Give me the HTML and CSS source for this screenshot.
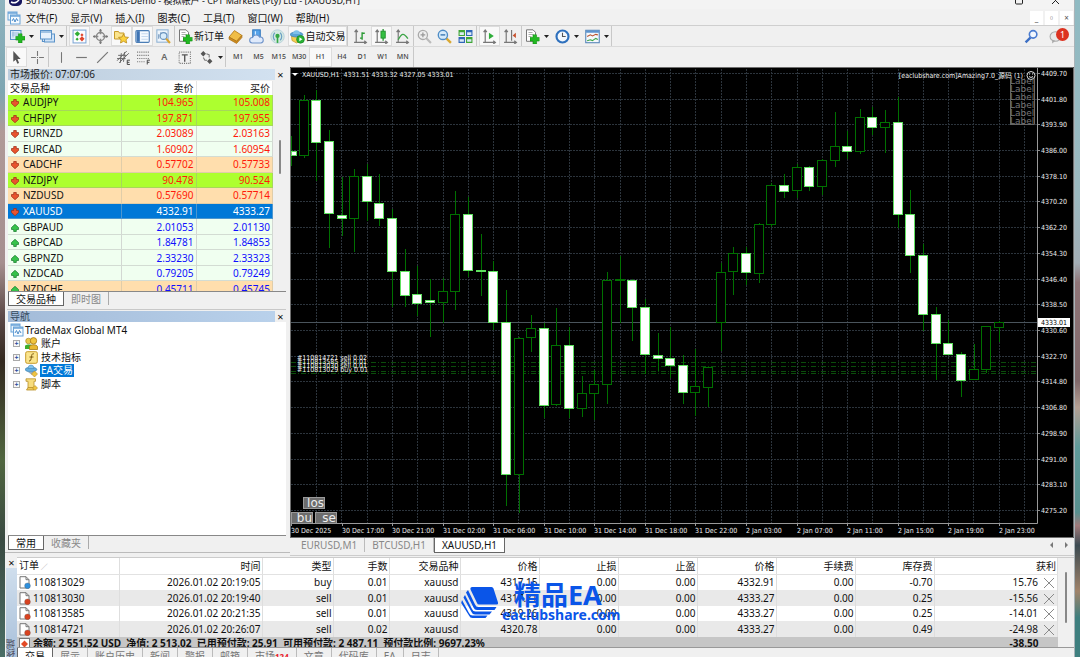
FILE: index.html
```html
<!DOCTYPE html>
<html lang="zh-CN">
<head>
<meta charset="utf-8">
<title>XAUUSD,H1</title>
<link rel="stylesheet" href="styles.css">
</head>
<body>
<svg class="defs" aria-hidden="true">
  <symbol id="i-drop" viewBox="0 0 5 3"><path d="M0 0h5L2.500 3z" fill="#222"/></symbol>
  <symbol id="i-plus" viewBox="0 0 8 8"><path d="M2.500 0h3v2.500H8v3H5.500V8h-3V5.500H0v-3h2.500z" fill="#22b822" stroke="#0c8a0c" stroke-width=".5"/></symbol>
  <symbol id="i-newchart" viewBox="0 0 15 14"><rect x=".5" y="1" width="10.500" height="9" fill="#dcecfb" stroke="#5b93c9"/><path d="M2 3.500h7M2 5.500h7M3 2v6" stroke="#8fb4d8" stroke-width=".8"/><use href="#i-plus" x="5.500" y="4" width="9.500" height="9.500"/></symbol>
  <symbol id="i-profiles" viewBox="0 0 15 14"><rect x="4.500" y="4.500" width="10" height="8" fill="#cfe2f6" stroke="#5b93c9"/><rect x=".5" y="1" width="11" height="8.500" fill="#e8f2fc" stroke="#5b93c9"/><path d="M1 2.500h10M2.500 9.500V12h2" stroke="#5b93c9" stroke-width="1.200" fill="none"/></symbol>
  <symbol id="i-market" viewBox="0 0 14 14"><rect x="1" y="1" width="12" height="12" fill="#fdfdff" stroke="#7fa9d6"/><path d="M5 2l2.500 2.500L5 7 2.500 4.500z" fill="#2fae35"/><path d="M9.300 4l1.500 1.500L9.300 7 7.800 5.500z" fill="#e0452c"/><path d="M9.300 6.800l2.400 2.400-2.400 2.400-2.400-2.400z" fill="#e0452c"/><path d="M4.800 8l1.500 1.500-1.500 1.500-1.500-1.500z" fill="#2fae35"/></symbol>
  <symbol id="i-cross" viewBox="0 0 14 14"><circle cx="7" cy="7" r="3.800" fill="none" stroke="#888" stroke-width="1.300"/><path d="M7 0v5M7 9v5M0 7h5M9 7h5" stroke="#888" stroke-width="1.300"/><path d="M7 0l1.500 2h-3zM7 14l1.500-2h-3zM0 7l2-1.500v3zM14 7l-2-1.500v3z" fill="#777"/></symbol>
  <symbol id="i-star" viewBox="0 0 15 14"><path d="M.5 2h4l1 1.500h4.500v6H.5z" fill="#fbe48c" stroke="#c69a2b"/><path d="M9.500 4.500l1.500 3 3.500.4-2.500 2.300.7 3.300-3.200-1.700-3 1.700.6-3.300L4.500 7.900l3.500-.4z" fill="#fcd33e" stroke="#b98a1c" stroke-width=".8"/></symbol>
  <symbol id="i-terminal" viewBox="0 0 14 14"><rect x=".8" y="1.500" width="12.500" height="11" rx="1" fill="#f5faff" stroke="#4a7db5"/><rect x="1.500" y="2" width="3" height="10" fill="#3e74b4"/><path d="M6 4.500h6M6 7h6M6 9.500h6" stroke="#c5d9ee"/></symbol>
  <symbol id="i-tester" viewBox="0 0 14 14"><rect x=".8" y=".8" width="10.500" height="11.500" fill="#eef5fc" stroke="#8fb2d4"/><path d="M2.500 9V5M4.500 7V3" stroke="#7b9cc0"/><circle cx="7" cy="6.500" r="3.200" fill="#d8ecfb" stroke="#6a94bd" stroke-width="1.100"/><path d="M9.500 9l3.500 4" stroke="#d9a32e" stroke-width="2"/></symbol>
  <symbol id="i-order" viewBox="0 0 14 15"><path d="M1 .8h6.500l2.500 2.500v9H1z" fill="#fff" stroke="#777"/><path d="M3 3.500h4M3 5.500h5M3 7.500h3" stroke="#999" stroke-width=".8"/><use href="#i-plus" x="4.500" y="5.500" width="9.500" height="9.500"/></symbol>
  <symbol id="i-book" viewBox="0 0 14 14"><path d="M1 7.500L6 1.500l7 4.500-5 5.500z" fill="#f0bd45" stroke="#b47c18" stroke-width=".8"/><path d="M1 7.500v2L8 13.500l5-5.500V6l-5 5.500z" fill="#d28d1e" stroke="#a06a12" stroke-width=".6"/></symbol>
  <symbol id="i-cloud" viewBox="0 0 14 14"><rect x="3.500" y=".8" width="7" height="7" fill="#55a3ea" stroke="#3278bd"/><path d="M6 2v4" stroke="#d8edff"/><path d="M3 13a2.500 2.500 0 0 1 .3-5 3.700 3.700 0 0 1 6.700-.4A2.700 2.700 0 0 1 11 13z" fill="#dfeafb" stroke="#6d92c9"/></symbol>
  <symbol id="i-signal" viewBox="0 0 14 14"><circle cx="7" cy="7" r="6.300" fill="#d4e9e0" stroke="#b4cfdc" stroke-width=".8"/><path d="M4.500 3.500a5 5 0 0 0 0 7M9.500 3.500a5 5 0 0 1 0 7" fill="none" stroke="#6a9fc4" stroke-width="1.100"/><circle cx="7" cy="6.500" r="2" fill="#35a845"/><path d="M7 7v6" stroke="#35a845" stroke-width="1.500"/></symbol>
  <symbol id="i-auto" viewBox="0 0 15 14"><path d="M1.500 6.500h10l-.5 4.500-4.500 2.500L2 11z" fill="#f4cf52" stroke="#c4942a" stroke-width=".7"/><ellipse cx="6.500" cy="5" rx="6.300" ry="2.500" fill="#5aa5d8" stroke="#3b80b6" stroke-width=".7"/><path d="M3 4.500a3.500 3.800 0 0 1 7 0z" fill="#7fc0ea"/><circle cx="10.500" cy="9.800" r="3.900" fill="#28b234" stroke="#127a1c" stroke-width=".6"/><path d="M9.400 7.800v4l3-2z" fill="#fff"/></symbol>
  <symbol id="i-bars" viewBox="0 0 14 14"><path d="M3 1v11.500M1 12.500h11M1.500 3L3 1l1.500 2M10.500 11l2 1.500-2 1.500" fill="none" stroke="#777" stroke-width="1.100"/><path d="M8.500 3v7M8.500 4h2.500M6.500 8.500h2" stroke="#2b9a35" stroke-width="1.300"/></symbol>
  <symbol id="i-candle" viewBox="0 0 14 14"><path d="M3 1v11.500M1 12.500h11M1.500 3L3 1l1.500 2M10.500 11l2 1.500-2 1.500" fill="none" stroke="#777" stroke-width="1.100"/><path d="M8.500 0v11" stroke="#1e8f2a" stroke-width="1.200"/><rect x="6.500" y="2" width="4" height="6.500" fill="#35c043" stroke="#1e8f2a" stroke-width=".8"/></symbol>
  <symbol id="i-line" viewBox="0 0 14 14"><path d="M3 1v11.500M1 12.500h11M1.500 3L3 1l1.500 2M10.500 11l2 1.500-2 1.500" fill="none" stroke="#777" stroke-width="1.100"/><path d="M3 10c3-6 5-7 9-1" stroke="#3ba546" fill="none" stroke-width="1.300"/></symbol>
  <symbol id="i-zin" viewBox="0 0 14 14"><path d="M8.500 8.500l4.500 4.500" stroke="#bbb" stroke-width="2"/><circle cx="5.500" cy="5.500" r="4.300" fill="#eee" stroke="#aaa" stroke-width="1.200"/><path d="M5.500 3.300v4.400M3.300 5.500h4.400" stroke="#999" stroke-width="1.200"/></symbol>
  <symbol id="i-zout" viewBox="0 0 14 14"><path d="M8.500 8.500l4.500 4.500" stroke="#d9a832" stroke-width="2.200"/><circle cx="5.500" cy="5.500" r="4.300" fill="#d5ebfb" stroke="#4f8dc6" stroke-width="1.300"/><path d="M3.300 5.500h4.400" stroke="#3978b5" stroke-width="1.300"/></symbol>
  <symbol id="i-tile" viewBox="0 0 14 14"><path d="M.5 1h6v5.500h-6zM7.500 7.500h6V13h-6z" fill="#3fa535"/><path d="M7.500 1h6v5.500h-6zM.5 7.500h6V13h-6z" fill="#2f66b8"/><path d="M1.500 3h4v2.500h-4zM8.500 3h4v2.500h-4zM1.500 9.500h4V12h-4zM8.500 9.500h4V12h-4z" fill="#dceaf5"/></symbol>
  <symbol id="i-scroll" viewBox="0 0 14 14"><path d="M3 1v11.500M1 12.500h11M1.500 3L3 1l1.500 2M10.500 11l2 1.500-2 1.500" fill="none" stroke="#777" stroke-width="1.100"/><path d="M6.500 3.500v6L11 6.500z" fill="#2fae3a"/></symbol>
  <symbol id="i-shift" viewBox="0 0 14 14"><path d="M3 1v11.500M1 12.500h11M1.500 3L3 1l1.500 2M10.500 11l2 1.500-2 1.500M8 1v10" fill="none" stroke="#777" stroke-width="1.100"/><path d="M9 6l3-2.500v5z" fill="#c7502c"/></symbol>
  <symbol id="i-clock" viewBox="0 0 14 14"><circle cx="7" cy="7" r="5.600" fill="#f3f8fd" stroke="#2e70bd" stroke-width="2"/><path d="M7 3.500V7h3" stroke="#555" fill="none"/></symbol>
  <symbol id="i-template" viewBox="0 0 14 14"><rect x=".7" y="1.200" width="12.600" height="11.600" fill="#f4f8fc" stroke="#5585b8"/><path d="M1 2.500h12" stroke="#5b93cf" stroke-width="2"/><path d="M2 7l3-1.500 2 1 3-1.500 2 .5" fill="none" stroke="#b9532f"/><path d="M2 11l3-1 2 .8 3-2 2 1" fill="none" stroke="#3ba546"/></symbol>
  <symbol id="i-cursor" viewBox="0 0 14 14"><path d="M4 1v10l2.300-2 1.500 3.800 1.600-.7L7.900 8.500h3z" fill="#555"/></symbol>
  <symbol id="i-hair" viewBox="0 0 14 14"><path d="M7 1v4.500M7 8.500V13M1 7h4.500M8.500 7H13M6.500 7h1" stroke="#777"/></symbol>
  <symbol id="i-vline" viewBox="0 0 14 14"><path d="M7 2v10" stroke="#777"/></symbol>
  <symbol id="i-hline" viewBox="0 0 14 14"><path d="M2 7h10" stroke="#777" stroke-width="1.100"/></symbol>
  <symbol id="i-trend" viewBox="0 0 14 14"><path d="M2 12L12 2" stroke="#777" stroke-width="1.100"/></symbol>
  <symbol id="i-channel" viewBox="0 0 14 14"><path d="M1 10L10 1M3 12L12 3M2 5h8M1 8h8M5 3l-1 9M8 2L7 11" stroke="#666" fill="none" stroke-width=".9"/><path d="M13 9.500h-2.500v4H13M10.500 11.500h2" stroke="#444" fill="none" stroke-width=".9"/></symbol>
  <symbol id="i-fibo" viewBox="0 0 14 14"><path d="M1 2h12M1 5h12M1 8h12M1 11h7" stroke="#777" stroke-dasharray="1 1"/><path d="M13 9.500h-2.500v4M10.500 11.500h2" stroke="#444" fill="none" stroke-width=".9"/></symbol>
  <symbol id="i-label" viewBox="0 0 14 14"><rect x="2" y="2" width="10.500" height="10.500" fill="none" stroke="#777" stroke-dasharray="1 1"/><path d="M4.500 4.500h5.500M7.200 4.500V11" stroke="#555" stroke-width="1.300"/></symbol>
  <symbol id="i-arrows" viewBox="0 0 14 14"><path d="M4 1l2.500 2.500L4 6 1.500 3.500zM10 8l2.500 2.500L10 13l-2.500-2.500z" fill="#555"/><path d="M4 7l1.500 2.500h2M7 3.500l2.500 1V7" stroke="#777" fill="none"/></symbol>
  <symbol id="i-down" viewBox="0 0 8 8"><path d="M2.700.5h2.600v2H7.500v2L4 7.700.5 4.500v-2h2.200z" fill="#e8542e" stroke="#9c2a12" stroke-width=".7"/></symbol>
  <symbol id="i-up" viewBox="0 0 8 8"><path d="M2.700 7.500h2.600v-2H7.500v-2L4 .3.500 3.500v2h2.200z" fill="#36c24a" stroke="#14752a" stroke-width=".7"/></symbol>
  <symbol id="i-mt" viewBox="0 0 14 14"><rect x="1" y="1" width="9" height="8" fill="#eaf4fd" stroke="#69a3d8"/><rect x="3.500" y="4" width="9.500" height="9" fill="#f6fbff" stroke="#69a3d8"/><path d="M1 2h9M3.500 5h9.500" stroke="#69a3d8" stroke-width="1.500"/><path d="M5 10l1.500-2.500L8 11l1.500-3.500L11 10" fill="none" stroke="#4d8cc9"/></symbol>
  <symbol id="i-acc" viewBox="0 0 13 13"><circle cx="3.500" cy="4" r="2.800" fill="#e9c84a" stroke="#a47a14" stroke-width=".6"/><path d="M0 12V9c0-2 8-2 8 0v3z" fill="#3fae2b"/><circle cx="8.500" cy="3.800" r="3.200" fill="#f1c53d" stroke="#a47a14" stroke-width=".8"/><path d="M4.500 12.500V10c0-3 8-3 8 0v2.500z" fill="#e9b92f" stroke="#a47a14" stroke-width=".8"/></symbol>
  <symbol id="i-ind" viewBox="0 0 13 13"><rect x=".7" y=".7" width="11.600" height="11.600" rx="1.500" fill="#fbe58d" stroke="#c79b2b"/><path d="M9 3c-2-1-2.300 1-2.600 3S5.800 10.500 4 10M4.500 6h4" fill="none" stroke="#7c5a10"/></symbol>
  <symbol id="i-ea" viewBox="0 0 13 13"><ellipse cx="6" cy="5.500" rx="5.800" ry="2.300" fill="#63aede" stroke="#3b7fb2" stroke-width=".7"/><path d="M3 4.500a3 3.500 0 0 1 6 0z" fill="#7fc2ec" stroke="#3b7fb2" stroke-width=".5"/><path d="M3 8h6l-2 3z" fill="#9ab"/><path d="M9.500 7l3 3-3 3-3-3z" fill="#f0c340" stroke="#b48a1e" stroke-width=".6"/></symbol>
  <symbol id="i-script" viewBox="0 0 13 13"><path d="M1 .8h9.500v2.500H9v7H3v-7H1z" fill="#f7dc7c" stroke="#b78f2a" stroke-width=".8"/><path d="M3 9.500h6v2.500H1.500z" fill="#eec95b" stroke="#b78f2a" stroke-width=".8"/><path d="M10 7.500l2.500 2.500-2.500 2.500L7.500 10z" fill="#f0c340" stroke="#b48a1e" stroke-width=".6"/></symbol>
  <symbol id="i-doc" viewBox="0 0 12 13"><path d="M1 .7h6l3 3v8.300H1z" fill="#fff" stroke="#777"/><path d="M7 .7v3h3" fill="none" stroke="#777"/><circle cx="8.500" cy="9.800" r="2.900" fill="currentColor" stroke="#555" stroke-width=".3"/></symbol>
  <symbol id="i-x" viewBox="0 0 12 12"><path d="M1 1l10 10M11 1L1 11" stroke="#8a8a8a"/></symbol>
</svg>

<div class="window">
  <header class="titlebar">
    <svg class="app-logo" viewBox="0 0 13 13"><path d="M0 0h13v9a5 4 0 0 1-5 4H5a5 4 0 0 1-5-4z" fill="#16165e"/><path d="M2 9c4 2 7 0 9-4" stroke="#fff" fill="none" stroke-width="1.500"/></svg>
    <span>501405300: CPTMarkets-Demo - 模拟帐户 - CPT Markets (Pty) Ltd - [XAUUSD,H1]</span>
    <svg class="win-ctl" viewBox="0 0 46 10"><rect x="1.500" y="0" width="7" height="8" rx="1" fill="none" stroke="#222"/><path d="M38 1l7 7M45 1l-7 7" stroke="#222"/></svg>
  </header>

  <nav class="menu">
    <svg class="ic"><use href="#i-mt"/></svg>
    <a href="#">文件(F)</a><a href="#">显示(V)</a><a href="#">插入(I)</a><a href="#">图表(C)</a><a href="#">工具(T)</a><a href="#">窗口(W)</a><a href="#">帮助(H)</a>
    <span class="mdi"><button aria-label="最小化">_</button><button aria-label="还原">▫</button><button aria-label="关闭">×</button></span>
  </nav>

  <div class="toolbar">
    <button class="tb dd" aria-label="新图表"><svg class="ic"><use href="#i-newchart"/></svg><svg class="ar"><use href="#i-drop"/></svg></button>
    <button class="tb dd" aria-label="配置文件"><svg class="ic"><use href="#i-profiles"/></svg><svg class="ar"><use href="#i-drop"/></svg></button>
    <i class="sep"></i>
    <button class="tb on" aria-label="市场报价"><svg class="ic"><use href="#i-market"/></svg></button>
    <button class="tb" aria-label="数据窗口"><svg class="ic"><use href="#i-cross"/></svg></button>
    <button class="tb on" aria-label="导航"><svg class="ic"><use href="#i-star"/></svg></button>
    <button class="tb on" aria-label="终端"><svg class="ic"><use href="#i-terminal"/></svg></button>
    <button class="tb" aria-label="策略测试"><svg class="ic"><use href="#i-tester"/></svg></button>
    <i class="sep"></i>
    <button class="tb text"><svg class="ic"><use href="#i-order"/></svg>新订单</button>
    <button class="tb" aria-label="编辑器"><svg class="ic"><use href="#i-book"/></svg></button>
    <button class="tb" aria-label="云"><svg class="ic"><use href="#i-cloud"/></svg></button>
    <button class="tb" aria-label="信号"><svg class="ic"><use href="#i-signal"/></svg></button>
    <button class="tb text on"><svg class="ic"><use href="#i-auto"/></svg>自动交易</button>
    <i class="sep"></i>
    <button class="tb" aria-label="柱状图"><svg class="ic"><use href="#i-bars"/></svg></button>
    <button class="tb on" aria-label="蜡烛图"><svg class="ic"><use href="#i-candle"/></svg></button>
    <button class="tb" aria-label="折线图"><svg class="ic"><use href="#i-line"/></svg></button>
    <button class="tb rule" aria-label="放大"><svg class="ic"><use href="#i-zin"/></svg></button>
    <button class="tb" aria-label="缩小"><svg class="ic"><use href="#i-zout"/></svg></button>
    <button class="tb" aria-label="平铺"><svg class="ic"><use href="#i-tile"/></svg></button>
    <i class="sep"></i>
    <button class="tb on" aria-label="自动滚动"><svg class="ic"><use href="#i-scroll"/></svg></button>
    <button class="tb" aria-label="图表平移"><svg class="ic"><use href="#i-shift"/></svg></button>
    <button class="tb dd rule" aria-label="指标"><svg class="ic"><use href="#i-order"/></svg><svg class="ar"><use href="#i-drop"/></svg></button>
    <button class="tb dd" aria-label="周期"><svg class="ic"><use href="#i-clock"/></svg><svg class="ar"><use href="#i-drop"/></svg></button>
    <button class="tb dd" aria-label="模板"><svg class="ic"><use href="#i-template"/></svg><svg class="ar"><use href="#i-drop"/></svg></button>
    <i class="sep"></i>
    <button class="tb search" aria-label="搜索"><svg class="ic" viewBox="0 0 14 14"><path d="M6 8l-4.500 4.500" stroke="#3c6fc4" stroke-width="2.200"/><circle cx="8.500" cy="5" r="3.500" fill="#f2f7ff" stroke="#4a7bd0" stroke-width="1.500"/></svg></button>
    <button class="tb chat" aria-label="消息"><svg class="ic" viewBox="0 0 14 14"><ellipse cx="6" cy="7" rx="5" ry="4.500" fill="#e8e8e8" stroke="#aaa"/><path d="M3 10v3.500l3-2.500z" fill="#aaa"/></svg><span class="badge">1</span></button>
  </div>

  <div class="toolbar">
    <button class="tb on" aria-label="光标"><svg class="ic"><use href="#i-cursor"/></svg></button>
    <button class="tb" aria-label="十字线"><svg class="ic"><use href="#i-hair"/></svg></button>
    <i class="sep"></i>
    <div class="lines">
      <button class="tb" aria-label="垂直线"><svg class="ic"><use href="#i-vline"/></svg></button>
      <button class="tb" aria-label="水平线"><svg class="ic"><use href="#i-hline"/></svg></button>
      <button class="tb" aria-label="趋势线"><svg class="ic"><use href="#i-trend"/></svg></button>
      <button class="tb" aria-label="通道"><svg class="ic"><use href="#i-channel"/></svg></button>
      <button class="tb" aria-label="斐波纳契"><svg class="ic"><use href="#i-fibo"/></svg></button>
      <button class="tb letter">A</button>
      <button class="tb" aria-label="标签"><svg class="ic"><use href="#i-label"/></svg></button>
    </div>
    <button class="tb dd" aria-label="箭头"><svg class="ic"><use href="#i-arrows"/></svg><svg class="ar"><use href="#i-drop"/></svg></button>
    <i class="sep"></i>
    <div class="periods">
      <button class="tb">M1</button><button class="tb">M5</button><button class="tb">M15</button><button class="tb">M30</button><button class="tb on">H1</button><button class="tb">H4</button><button class="tb">D1</button><button class="tb">W1</button><button class="tb">MN</button>
    </div>
  </div>

  <main class="workspace">
    <aside class="side">
      <section class="dock watch">
        <div class="dock-title pale"><h2>市场报价: 07:07:06</h2><button aria-label="关闭">×</button></div>
        <div class="watch-body">
          <table class="quotes">
            <colgroup><col class="c-sym"><col class="c-bid"><col class="c-ask"></colgroup>
            <thead><tr><th>交易品种</th><th>卖价</th><th>买价</th></tr></thead>
            <tbody>
              <tr class="lime"><td><svg><use href="#i-down"/></svg>AUDJPY</td><td>104.965</td><td>105.008</td></tr>
              <tr class="lime"><td><svg><use href="#i-down"/></svg>CHFJPY</td><td>197.871</td><td>197.955</td></tr>
              <tr><td><svg><use href="#i-down"/></svg>EURNZD</td><td>2.03089</td><td>2.03163</td></tr>
              <tr><td><svg><use href="#i-down"/></svg>EURCAD</td><td>1.60902</td><td>1.60954</td></tr>
              <tr class="peach"><td><svg><use href="#i-down"/></svg>CADCHF</td><td>0.57702</td><td>0.57733</td></tr>
              <tr class="lime"><td><svg><use href="#i-down"/></svg>NZDJPY</td><td>90.478</td><td>90.524</td></tr>
              <tr class="peach"><td><svg><use href="#i-down"/></svg>NZDUSD</td><td>0.57690</td><td>0.57714</td></tr>
              <tr class="sel"><td><svg><use href="#i-down"/></svg>XAUUSD</td><td>4332.91</td><td>4333.27</td></tr>
              <tr class="rise"><td><svg><use href="#i-up"/></svg>GBPAUD</td><td>2.01053</td><td>2.01130</td></tr>
              <tr class="rise"><td><svg><use href="#i-up"/></svg>GBPCAD</td><td>1.84781</td><td>1.84853</td></tr>
              <tr class="rise"><td><svg><use href="#i-up"/></svg>GBPNZD</td><td>2.33230</td><td>2.33323</td></tr>
              <tr class="rise"><td><svg><use href="#i-up"/></svg>NZDCAD</td><td>0.79205</td><td>0.79249</td></tr>
              <tr class="rise peach"><td><svg><use href="#i-up"/></svg>NZDCHF</td><td>0.45711</td><td>0.45745</td></tr>
            </tbody>
          </table>
          <span class="thumb"></span>
        </div>
        <div class="tabs"><button class="active">交易品种</button><button>即时图</button></div>
      </section>
      <section class="dock navigator">
        <div class="dock-title"><h2>导航</h2><button aria-label="关闭">×</button></div>
        <ul class="tree">
          <li class="root"><svg class="ic"><use href="#i-mt"/></svg>TradeMax Global MT4</li>
          <li><b>+</b><svg class="ic"><use href="#i-acc"/></svg><span>账户</span></li>
          <li><b>+</b><svg class="ic"><use href="#i-ind"/></svg><span>技术指标</span></li>
          <li><b>+</b><svg class="ic"><use href="#i-ea"/></svg><span class="picked">EA交易</span></li>
          <li><b>+</b><svg class="ic"><use href="#i-script"/></svg><span>脚本</span></li>
        </ul>
        <div class="tabs"><button class="active">常用</button><button>收藏夹</button></div>
      </section>
    </aside>

    <section class="chart-area">
      <div class="chart">
        <svg id="chart" viewBox="290 67 784 471" role="img" aria-label="XAUUSD,H1"></svg>
        <button class="ea-btn b-close">los</button>
        <button class="ea-btn b-buy">bu</button>
        <button class="ea-btn b-sell">se</button>
      </div>
      <div class="chart-tabs">
        <button>EURUSD,M1</button><button>BTCUSD,H1</button><button class="active">XAUUSD,H1</button>
        <svg viewBox="0 0 20 8"><path d="M4 1v6L1 4zM16 1v6l3-3z" fill="#777"/></svg>
      </div>
    </section>
  </main>

  <section class="terminal">
    <div class="grip"><button aria-label="关闭">×</button><span>终端</span></div>
    <div class="term-main">
      <div class="term-table">
        <table class="orders">
          <colgroup><col class="w-id"><col class="w-time"><col class="w-type"><col class="w-lots"><col class="w-type"><col class="w-num"><col class="w-num"><col class="w-num"><col class="w-num"><col class="w-num"><col class="w-num"><col></colgroup>
          <thead><tr><th>订单<small> ∕</small></th><th>时间</th><th>类型</th><th>手数</th><th>交易品种</th><th>价格</th><th>止损</th><th>止盈</th><th>价格</th><th>手续费</th><th>库存费</th><th>获利</th></tr></thead>
          <tbody>
            <tr><td><svg class="doc buy"><use href="#i-doc"/></svg>110813029</td><td>2026.01.02 20:19:05</td><td>buy</td><td>0.01</td><td>xauusd</td><td>4317.15</td><td>0.00</td><td>0.00</td><td>4332.91</td><td>0.00</td><td>-0.70</td><td>15.76<svg class="x"><use href="#i-x"/></svg></td></tr>
            <tr><td><svg class="doc"><use href="#i-doc"/></svg>110813030</td><td>2026.01.02 20:19:40</td><td>sell</td><td>0.01</td><td>xauusd</td><td>4317.71</td><td>0.00</td><td>0.00</td><td>4333.27</td><td>0.00</td><td>0.25</td><td>-15.56<svg class="x"><use href="#i-x"/></svg></td></tr>
            <tr><td><svg class="doc"><use href="#i-doc"/></svg>110813585</td><td>2026.01.02 20:21:35</td><td>sell</td><td>0.01</td><td>xauusd</td><td>4319.26</td><td>0.00</td><td>0.00</td><td>4333.27</td><td>0.00</td><td>0.25</td><td>-14.01<svg class="x"><use href="#i-x"/></svg></td></tr>
            <tr><td><svg class="doc"><use href="#i-doc"/></svg>110814721</td><td>2026.01.02 20:26:07</td><td>sell</td><td>0.02</td><td>xauusd</td><td>4320.78</td><td>0.00</td><td>0.00</td><td>4333.27</td><td>0.00</td><td>0.49</td><td>-24.98<svg class="x"><use href="#i-x"/></svg></td></tr>
          </tbody>
          <tfoot><tr><td colspan="11"><svg class="bal" viewBox="0 0 11 12"><rect x=".5" y=".5" width="10" height="11" fill="#fff" stroke="#777"/><path d="M5.500 2.500l3.500 3.500-3.500 3.500L2 6z" fill="#e34a26"/></svg>余额: 2 551.52 USD&nbsp; 净值: 2 513.02&nbsp; 已用预付款: 25.91&nbsp; 可用预付款: 2 487.11&nbsp; 预付款比例: 9697.23%</td><td>-38.50</td></tr></tfoot>
        </table>
        <span class="thumb"></span>
        <div class="mark">
          <svg viewBox="0 0 37 32"><path d="M13 1h17.500q1.500 0 2 1.500L37 16.500q.3 2-1 2H18q-1.500 0-2-1.500L9.500 3.500Q9 1 11 1z"/><path d="M7 4l7 14.500q1 2.500 3.500 2.500h18l-2 3H16q-2.500 0-3.500-2.500L5 6.500z"/><path d="M4 9l7 14q1 2.500 3.500 2.500H31l-2.500 3H14q-2.500 0-3.500-2.500L2.500 11.500z"/><path d="M1 14l7 13q1.300 2.500 3.500 2.500h15L24.500 32H11.500q-2.500 0-3.500-2.500L.2 17z"/></svg>
          <p><strong>精品EA</strong><span>eaclubshare.com</span></p>
        </div>
      </div>
      <div class="term-tabs"><button class="active">交易</button><button>展示</button><button>账户历史</button><button>新闻</button><button>警报</button><button>邮箱</button><button>市场<em>124</em></button><button>文章</button><button>代码库</button><button>EA</button><button>日志</button></div>
    </div>
  </section>
</div>
<script src="chart.js"></script>
</body>
</html>
```
FILE: styles.css
```css
*, *::after { box-sizing: border-box; }
html, body { height: 100%; }
body {
  margin: 0;
  overflow: hidden;
  display: flex;
  font: 10px/14px "Noto Sans", "Noto Sans CJK SC", sans-serif;
  color: #111;
  background: linear-gradient(#8fb4bf, #7ea6b2 14%, #b09a98 20%, #a58f8f 40%, #5d4a48 48%, #33291f 55%, #50663f 70%, #3a4a42 82%, #4a6e66);
}
body::after {
  content: "";
  flex: 0 0 6px;
  border-left: 1px solid #a9b3b8;
  background: linear-gradient(#8fbac2, #9cb9c0 30%, #a3aeb6 40%, #8f7578 43%, #80696b 58%, #b49f93 62%, #5f9a9a 68%, #58908f 78%, #a07a7a 80%, #3b4a52 83%, #a0836a 90%, #3e7f7f 94%);
}
button { font: inherit; color: inherit; border: 0; padding: 0; margin: 0; background: none; white-space: nowrap; }
h2, p, ul { margin: 0; padding: 0; font: inherit; }
table { border-collapse: collapse; table-layout: fixed; width: 100%; }
.defs { position: absolute; width: 0; height: 0; }
.ic { width: 14px; height: 14px; flex: none; display: block; }
.toolbar .ic { width: 15px; height: 15px; }
.ar { width: 5px; height: 3px; flex: none; }

.window { flex: 1; min-width: 0; margin-left: 5px; height: 100%; display: flex; flex-direction: column; background: #f0f0f0; overflow: hidden; }

.titlebar { height: 9px; flex: none; overflow: hidden; display: flex; align-items: flex-end; gap: 4px; padding: 0 14px 3px 4px; background: #f3f3f3; font-size: 9px; line-height: 14px; white-space: nowrap; }
.app-logo { width: 13px; height: 13px; flex: none; }
.titlebar span { margin-bottom: -2px; }
.win-ctl { width: 46px; height: 10px; margin-left: auto; flex: none; }

.menu { height: 17px; flex: none; display: flex; align-items: center; padding: 1px 1px 0 2px; background: #f1f1f1; border-bottom: 1px solid #cfcfcf; }
.menu a { color: #111; text-decoration: none; margin-right: 13px; }
.menu .ic { margin-right: 5px; }
.mdi { margin-left: auto; display: flex; gap: 2px; font-size: 8px; color: #555; }
.mdi button { width: 13px; height: 14px; line-height: 12px; background: #fff; }

.toolbar { height: 21px; flex: none; display: flex; align-items: stretch; padding-left: 1px; background: #f0f0f0; border-bottom: 1px solid #dadada; }
.toolbar + .toolbar { height: 20px; border-bottom: 0; }
.tb { width: 21px; display: flex; align-items: center; justify-content: center; flex: none; }
.tb.on { background: #f9f9f9; border: 1px solid #dcdcdc; }
.tb.dd { width: 30px; gap: 4px; padding-left: 1px; }
.tb.text { width: 48px; gap: 1px; }
.tb.text.on { width: 59px; gap: 1px; }
.tb.rule { border-left: 1px solid #c8c8c8; }
.sep { width: 3px; border-left: 1px solid #c8c8c8; flex: none; }
.search { margin-left: auto; }
.chat { width: 28px; position: relative; margin-right: 4px; }
.badge { position: absolute; right: 1px; top: 2px; width: 13px; height: 13px; border-radius: 50%; background: #dc3220; color: #fff; font-size: 9px; line-height: 13px; text-align: center; }
.lines { display: flex; width: 144px; }
.lines .tb, .periods .tb { flex: 1; width: auto; }
.letter { font-size: 9px; font-weight: 600; color: #666; }
.periods { display: flex; width: 186px; font-size: 7px; font-weight: 500; color: #444; border-right: 1px solid #c8c8c8; }

.workspace { display: flex; flex: none; }
.side { width: 285px; flex: none; display: flex; flex-direction: column; padding: 1px 4px 2px 2px; margin-bottom: 3px; border-bottom: 1px solid #bbb; }
.dock { display: flex; flex-direction: column; }
.watch { height: 242px; flex: none; border-bottom: 1px solid #c8c8c8; padding: 1px 0 0 1px; }
.navigator { flex: 1; padding: 1px 0 0 1px; }
.dock-title { display: flex; height: 11px; flex: none; line-height: 11px; margin-bottom: 1px; }
.navigator .dock-title { margin-bottom: 0; }
.dock-title h2 { flex: 1; padding-left: 2px; background: linear-gradient(90deg, #a3bbd8, #b9d1eb); color: #34495c; }
.dock-title.pale h2 { background: linear-gradient(90deg, #bccddd, #d2e1f0); color: #222; }
.dock-title button { width: 11px; font-size: 11px; line-height: 9px; }
.watch-body { height: 211px; flex: none; overflow: hidden; position: relative; border-bottom: 1px solid #888; padding-right: 13px; }
.quotes { height: 216px; }
.quotes .c-sym { width: 113px; }
.quotes .c-bid { width: 75px; }
.quotes th, .quotes td { padding: 1px 2px 0; text-align: right; line-height: 13px; font-weight: 400; white-space: nowrap; }
.quotes th { background: #fff; border-right: 1px solid #e5e5e5; }
.quotes th:first-child, .quotes td:first-child { text-align: left; color: #111; }
.quotes td { color: #ff1a0a; border-right: 1px solid #d3d8d3; border-bottom: 1px solid #d3dcd3; background: #f0fff0; }
.quotes svg { width: 8px; height: 8px; margin: 0 4px 0 1px; vertical-align: -1px; }
.quotes .lime td { background: #adff2f; border-color: #a6d85a; }
.quotes .peach td { background: #ffdead; border-color: #e0cda9; }
.quotes .rise td { color: #1010ff; }
.quotes .sel td { background: #0078d7; border-color: #4c96cf; color: #fff; }
.quotes tr td:first-child { color: #111; }
.quotes tr.sel td:first-child { color: #fff; }
.thumb { position: absolute; width: 2px; background: #888; border-radius: 1px; }
.watch-body .thumb { right: 5px; top: 59px; height: 34px; }
.tabs { display: flex; height: 14px; flex: none; line-height: 14px; color: #888; }
.tabs button { padding: 0 7px; border-right: 1px solid #aaa; line-height: 14px; height: 13px; }
.tabs .active { background: #fff; color: #111; border: 1px solid #666; border-top: 0; height: 14px; }

.tree { flex: 1; list-style: none; background: #fff; border-bottom: 1px solid #888; padding: 1px 0 0 2px; }
.tree li { display: flex; align-items: center; height: 14px; margin-bottom: -1px; padding-left: 3px; }
.tree li:nth-child(even) { height: 15px; }
.tree li.root { padding-left: 0; gap: 1px; }
.tree b { width: 7px; height: 7px; border: 1px solid #aaa; background: #f8f8f8; color: #2a4a9a; font-size: 7px; line-height: 5px; text-align: center; margin-right: 5px; flex: none; }
.tree li:not(.root) .ic { width: 13px; height: 13px; }
.tree span { line-height: 13px; padding: 0 1px; margin-left: 2px; }
.tree .picked { background: #0078d7; color: #fff; }

.chart-area { flex: 1; min-width: 0; display: flex; flex-direction: column; }
.chart { position: relative; line-height: 0; background: #000; }
.chart > svg { width: 100%; height: auto; display: block; }
.chart text { font-family: "DejaVu Sans Condensed", "Noto Sans", "Noto Sans CJK SC", sans-serif; font-size: 7px; fill: #eee; white-space: pre; }
.chart text.ghost { font-family: "DejaVu Sans", sans-serif; font-size: 9px; fill: #777; }
.chart text.now { fill: #000; }
.ea-btn { position: absolute; width: 22px; height: 12px; background: #6c6c6c; border: 1px solid #9a9a9a; color: #eee; font: 12px/11px "DejaVu Sans", sans-serif; text-align: right; overflow: hidden; }
.b-close { left: 13px; bottom: 29px; }
.b-buy { left: 1px; bottom: 14px; }
.b-sell { left: 25px; bottom: 14px; }
.chart-tabs { height: 18px; display: flex; align-items: flex-start; padding-left: 4px; color: #888; border-bottom: 1px solid #ccc; }
.chart-tabs button { height: 14px; line-height: 14px; padding: 0 7px; border-right: 1px solid #bbb; }
.chart-tabs .active { background: #fff; color: #111; border: 1px solid #666; border-top: 0; height: 15px; }
.chart-tabs svg { width: 20px; height: 8px; margin: 3px 5px 0 auto; }

.terminal { flex: 1; min-height: 0; display: flex; padding: 1px 0 0 1px; }
.grip { width: 11px; flex: none; display: flex; flex-direction: column; }
.grip button { height: 11px; line-height: 9px; font-size: 11px; }
.grip span { flex: 1; writing-mode: vertical-rl; transform: rotate(180deg); font-size: 9px; line-height: 10px; color: #445; background: linear-gradient(#a9c0da, #cfdeed); }
.term-main { flex: 1; min-width: 0; }
.term-table { position: relative; height: 91px; padding-right: 16px; border-top: 1px solid #ccc; border-bottom: 1px solid #999; overflow: hidden; }
.orders .w-id { width: 102px; }
.orders .w-time { width: 143px; }
.orders .w-type { width: 71px; }
.orders .w-lots { width: 56px; }
.orders .w-num { width: 79px; }
.orders th, .orders td { padding: 0 1px 0 2px; text-align: right; font-weight: 400; white-space: nowrap; border-right: 1px solid #dedede; height: 15px; line-height: 15px; }
.orders th { height: 16px; background: #fff; border-bottom: 1px solid #e2e2e2; }
.orders th:first-child, .orders td:first-child { text-align: left; }
.orders small { font-size: 7px; color: #aaa; }
.orders tbody td { background: #fff; }
.orders tbody tr:nth-child(even) td { background: #e9e9e9; height: 16px; }
.orders .doc { width: 12px; height: 13px; color: #d9421f; margin-right: 2px; vertical-align: -3px; }
.orders .doc.buy { color: #2e8fdc; }
.orders .x { width: 12px; height: 12px; margin: 0 1px 0 5px; vertical-align: -3px; }
.orders tfoot td { background: #c6c6c6; border: 0; font-weight: 700; height: 13px; line-height: 13px; }
.orders tfoot td:last-child { padding-right: 19px; }
.bal { width: 11px; height: 12px; vertical-align: -3px; margin: 0 3px 0 0; }
.term-table .thumb { right: 7px; top: 14px; height: 51px; }
.mark { position: absolute; left: 444px; top: 24px; display: flex; align-items: center; color: #0a55e8; pointer-events: none; }
.mark svg { width: 37px; height: 32px; fill: #0a55e8; }
.mark p { display: flex; flex-direction: column; margin-left: 4px; }
.mark strong { font-size: 27px; line-height: 26px; padding-left: 12px; }
.mark span { font-size: 14px; line-height: 14px; font-weight: 700; }
.term-tabs { display: flex; color: #777; height: 16px; }
.term-tabs button { padding: 0 7px; border-right: 1px solid #bbb; line-height: 14px; }
.term-tabs .active { background: #fff; color: #111; border: 1px solid #666; border-top: 0; }
.term-tabs em { font: 700 8px/8px "Noto Sans", sans-serif; color: #e8202a; }
```
FILE: chart.js
```js
(function () {
  var NS = 'http://www.w3.org/2000/svg';
  var svg = document.getElementById('chart');

  function add(name, attrs, text) {
    var el = document.createElementNS(NS, name);
    for (var k in attrs) el.setAttribute(k, attrs[k]);
    if (text !== undefined) el.textContent = text;
    svg.appendChild(el);
  }
  function hline(y, color, dash) {
    add('path', { d: 'M291 ' + y + 'H1037', stroke: color, 'stroke-dasharray': dash || 'none', fill: 'none' });
  }

  add('rect', { x: 290, y: 67, width: 784, height: 471, fill: '#000' });

  // grid
  var prices = ['4409.70', '4401.80', '4393.90', '4386.00', '4378.10', '4370.20', '4362.20', '4354.30', '4346.40',
    '4338.50', '4330.60', '4322.70', '4314.80', '4306.80', '4298.90', '4291.00', '4283.10', '4275.20'];
  var i, y, x;
  for (i = 0; i < 18; i++) {
    y = Math.round(72.8 + 25.72 * i) + 0.5;
    hline(y, '#2c343c', '2 1');
    add('path', { d: 'M1037 ' + y + 'h3', stroke: '#888' });
    add('text', { x: 1041, y: y + 2.5 }, prices[i]);
  }
  for (i = 0; i < 29; i++) {
    x = Math.round(316.2 + 25.28 * i) + 0.5;
    add('path', { d: 'M' + x + ' 69V523', stroke: '#2c343c', 'stroke-dasharray': '2 1' });
  }
  hline(322.5, '#4a545c');
  [362.5, 366.5, 371.5, 373.5].forEach(function (v) { hline(v, '#0b4d0b', '5 2 1 2'); });

  // candles: high, open/close top, open/close bottom, low, 1 = falling
  var candles = [
    [136, 151, 155, 166, 1], [95, 100, 155, 158, 0], [90, 100, 142, 181, 1], [130, 141, 213, 248, 1], [177, 215, 218, 236, 1],
    [169, 176, 218, 252, 0], [164, 176, 201, 221, 1], [174, 203, 218, 226, 1], [209, 218, 271, 307, 1], [249, 271, 295, 307, 1],
    [266, 294, 303, 316, 1], [279, 300, 302, 337, 1], [278, 291, 302, 323, 0], [191, 214, 291, 310, 0], [197, 214, 270, 277, 1],
    [234, 270, 271, 296, 1], [261, 271, 322, 330, 1], [290, 322, 474, 506, 1], [337, 338, 474, 513, 0], [315, 328, 337, 352, 0],
    [323, 328, 405, 418, 1], [308, 345, 404, 406, 0], [327, 345, 408, 418, 1], [376, 393, 408, 417, 0], [370, 384, 393, 420, 0],
    [272, 280, 384, 404, 0], [256, 279, 280, 323, 0], [279, 280, 307, 341, 1], [299, 307, 354, 374, 1], [333, 355, 358, 371, 1],
    [327, 358, 365, 378, 1], [355, 365, 392, 404, 1], [349, 386, 392, 416, 0], [367, 367, 387, 407, 0], [263, 272, 322, 351, 0],
    [247, 253, 271, 295, 0], [247, 253, 272, 285, 1], [223, 224, 273, 283, 0], [183, 185, 224, 227, 0], [174, 185, 191, 198, 1],
    [164, 167, 190, 198, 0], [166, 167, 186, 191, 1], [159, 160, 186, 195, 0], [112, 146, 160, 167, 0], [131, 146, 151, 159, 1],
    [109, 117, 151, 154, 0], [107, 117, 127, 135, 1], [110, 122, 127, 153, 0], [97, 122, 214, 228, 1], [190, 214, 255, 273, 1],
    [244, 255, 314, 331, 1], [307, 314, 343, 380, 1], [320, 343, 354, 354, 1], [352, 354, 380, 397, 1], [344, 369, 379, 380, 0],
    [326, 326, 369, 373, 0], [321, 322, 327, 342, 0]
  ];
  candles.forEach(function (c, n) {
    var cx = Math.round(291 + 12.64 * n) + 0.5;
    add('path', { d: 'M' + cx + ' ' + c[0] + 'V' + c[3], stroke: '#007000' });
    add('rect', {
      x: n ? cx - 5 : 291.5, y: c[1] + 0.5, width: n ? 9 : 5, height: c[2] - c[1],
      fill: c[4] ? '#fff' : '#000', stroke: c[4] ? '#5fe05f' : '#007000'
    });
  });

  // frame and axes
  add('path', { d: 'M290.5 538V67.5H1073.5V537.5H290', stroke: '#6e6e6e', fill: 'none' });
  add('path', { d: 'M1037.5 68V523.5H291', stroke: '#999', fill: 'none' });
  add('rect', { x: 1038, y: 318, width: 32, height: 9, fill: '#fff' });
  add('text', { x: 1041, y: 325, 'class': 'now' }, '4333.01');

  ['30 Dec 2025', '30 Dec 17:00', '30 Dec 21:00', '31 Dec 02:00', '31 Dec 06:00', '31 Dec 10:00', '31 Dec 14:00',
    '31 Dec 18:00', '31 Dec 22:00', '2 Jan 03:00', '2 Jan 07:00', '2 Jan 11:00', '2 Jan 15:00', '2 Jan 19:00', '2 Jan 23:00'
  ].forEach(function (t, n) {
    var tx = Math.round(291 + 50.56 * n);
    add('path', { d: 'M' + (tx + 0.5) + ' 523v3', stroke: '#999' });
    add('text', { x: tx, y: 533 }, t);
  });

  add('path', { d: 'M292 73h6l-3 3z', fill: '#fff' });
  add('text', { x: 302, y: 77 }, 'XAUUSD,H1  4331.51 4333.32 4327.05 4333.01');
  add('text', { x: 1023, y: 78, 'text-anchor': 'end' }, '[eaclubshare.com]Amazing7.0_源码 (1)');
  add('circle', { cx: 1031, cy: 75.5, r: 4, fill: 'none', stroke: '#ddd' });
  add('path', { d: 'M1029 76.5q2 2 4 0M1029.500 73.500v1M1032.500 73.500v1', fill: 'none', stroke: '#ddd' });
  [84, 92, 100, 108, 116, 124].forEach(function (v) {
    add('text', { x: 1010, y: v, 'class': 'ghost' }, 'Label');
  });
  add('path', { d: 'M1010.5 78V124M1034.5 78V124.5H1010', stroke: '#666', fill: 'none' });

  [['#110814721 sell 0.02', 360], ['#110813585 sell 0.01', 364], ['#110813030 sell 0.01', 368], ['#110813029 buy 0.01', 372]]
    .forEach(function (o) { add('text', { x: 297, y: o[1] }, o[0]); });
})();
```
